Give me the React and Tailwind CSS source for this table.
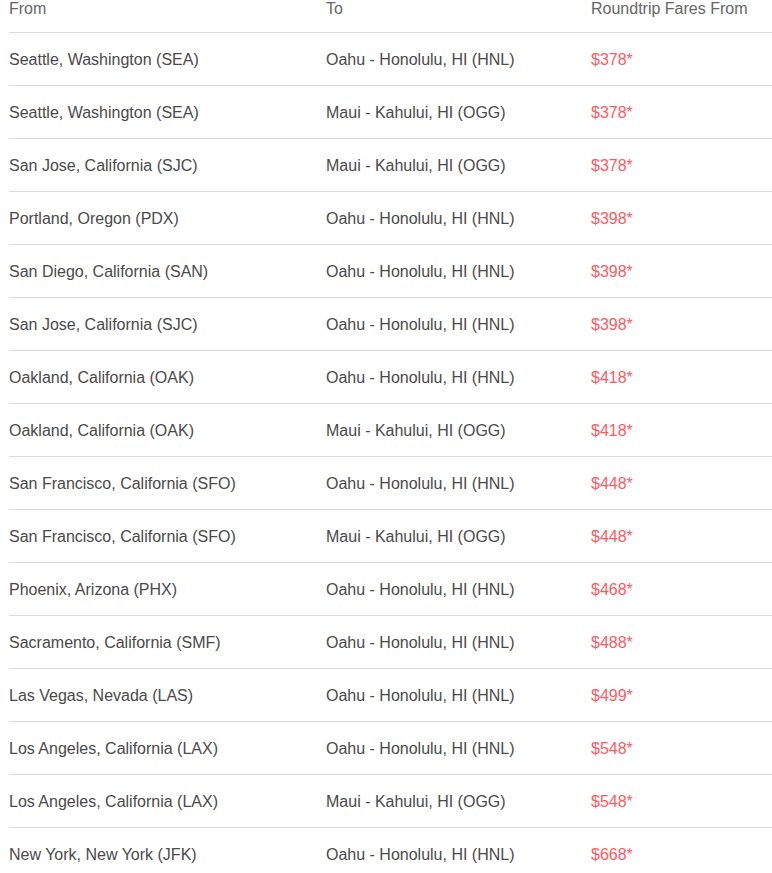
const fares = [
    ["Seattle, Washington (SEA)", "Oahu - Honolulu, HI (HNL)", "$378*"],
    ["Seattle, Washington (SEA)", "Maui - Kahului, HI (OGG)", "$378*"],
    ["San Jose, California (SJC)", "Maui - Kahului, HI (OGG)", "$378*"],
    ["Portland, Oregon (PDX)", "Oahu - Honolulu, HI (HNL)", "$398*"],
    ["San Diego, California (SAN)", "Oahu - Honolulu, HI (HNL)", "$398*"],
    ["San Jose, California (SJC)", "Oahu - Honolulu, HI (HNL)", "$398*"],
    ["Oakland, California (OAK)", "Oahu - Honolulu, HI (HNL)", "$418*"],
    ["Oakland, California (OAK)", "Maui - Kahului, HI (OGG)", "$418*"],
    ["San Francisco, California (SFO)", "Oahu - Honolulu, HI (HNL)", "$448*"],
    ["San Francisco, California (SFO)", "Maui - Kahului, HI (OGG)", "$448*"],
    ["Phoenix, Arizona (PHX)", "Oahu - Honolulu, HI (HNL)", "$468*"],
    ["Sacramento, California (SMF)", "Oahu - Honolulu, HI (HNL)", "$488*"],
    ["Las Vegas, Nevada (LAS)", "Oahu - Honolulu, HI (HNL)", "$499*"],
    ["Los Angeles, California (LAX)", "Oahu - Honolulu, HI (HNL)", "$548*"],
    ["Los Angeles, California (LAX)", "Maui - Kahului, HI (OGG)", "$548*"],
    ["New York, New York (JFK)", "Oahu - Honolulu, HI (HNL)", "$668*"],
];

export default function App() {

    return (

        <div className="min-h-screen bg-white pl-[9px] font-['Liberation_Sans',Arial,sans-serif] text-[16px] text-[#4a4a4a]">

            {/* HEADER */}

            <div className="grid grid-cols-[317px_265px_1fr] h-[33px] border-b border-[#dcdcdc] leading-[18px] text-[#666]">
                <div>From</div>
                <div>To</div>
                <div>Roundtrip Fares From</div>
            </div>

            {/* ROWS */}

            {fares.map(([from, to, price], i) => (

                <div
                    key={i}
                    className={
                        i === fares.length - 1
                            ? "grid grid-cols-[317px_265px_1fr] items-center h-[53px] pt-px"
                            : "grid grid-cols-[317px_265px_1fr] items-center h-[53px] pt-px border-b border-[#dcdcdc]"
                    }
                >
                    <div>{from}</div>
                    <div>{to}</div>
                    <div className="text-[#ff5a5f]">{price}</div>
                </div>

            ))}

        </div>

    );

}
